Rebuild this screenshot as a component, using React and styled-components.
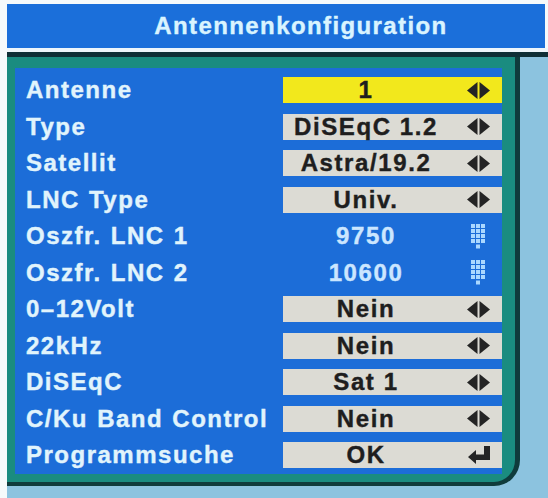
import React from 'react';
import styled, {createGlobalStyle} from 'styled-components';

const GlobalStyle = createGlobalStyle`
  html, body {
    margin: 0;
    padding: 0;
    background: #f6fafb;
  }
  body {
    font-family: "Liberation Sans", Arial, sans-serif;
  }
`

const rows = [
  {label: 'Antenne', value: '1', kind: 'active', icon: 'arrows'},
  {label: 'Type', value: 'DiSEqC 1.2', kind: 'box', icon: 'arrows'},
  {label: 'Satellit', value: 'Astra/19.2', kind: 'box', icon: 'arrows'},
  {label: 'LNC Type', value: 'Univ.', kind: 'box', icon: 'arrows'},
  {label: 'Oszfr. LNC 1', value: '9750', kind: 'plain', icon: 'keypad'},
  {label: 'Oszfr. LNC 2', value: '10600', kind: 'plain', icon: 'keypad'},
  {label: '0–12Volt', value: 'Nein', kind: 'box', icon: 'arrows'},
  {label: '22kHz', value: 'Nein', kind: 'box', icon: 'arrows'},
  {label: 'DiSEqC', value: 'Sat 1', kind: 'box', icon: 'arrows'},
  {label: 'C/Ku Band Control', value: 'Nein', kind: 'box', icon: 'arrows'},
  {label: 'Programmsuche', value: 'OK', kind: 'box', icon: 'enter'},
];

const ArrowsIcon = () => (
  <svg width="23" height="17" viewBox="0 0 23 17">
    <polygon points="0,8.5 10.5,0 10.5,17" fill="#242424" />
    <polygon points="12.5,0 23,8.5 12.5,17" fill="#242424" />
  </svg>
);

const KeypadIcon = () => {
  const dots = [];
  for (let r = 0; r < 4; r++) {
    for (let c = 0; c < 3; c++) {
      dots.push(<rect key={r + '-' + c} x={c * 5} y={r * 5} width="4" height="4" fill="#aad8ff" />);
    }
  }
  return (
    <svg width="15" height="25" viewBox="0 0 15 25">
      {dots}
      <rect x="5" y="20.5" width="4" height="4" fill="#aad8ff" />
    </svg>
  );
};

const EnterIcon = () => (
  <svg width="22" height="18" viewBox="0 0 22 18">
    <path d="M16 0 H22 V14 H8 V18 L0 11 L8 4 V8.5 H16 Z" fill="#242424" />
  </svg>
);

const icons = {arrows: ArrowsIcon, keypad: KeypadIcon, enter: EnterIcon};

const App = () => {
  return (
    <>
      <GlobalStyle />
      <Screen>
        <Header>
          <Title>Antennenkonfiguration</Title>
        </Header>
        <Rule />
        <Body>
          <Panel>
            <List>
              {rows.map(row => {
                const Icon = icons[row.icon];
                return (
                  <Row key={row.label}>
                    <Label>{row.label}</Label>
                    <ValueBox kind={row.kind}>
                      <Value kind={row.kind}>{row.value}</Value>
                      <IconSlot><Icon /></IconSlot>
                    </ValueBox>
                  </Row>
                );
              })}
            </List>
          </Panel>
        </Body>
      </Screen>
    </>
  );
};

const Screen = styled.div`
  width: 548px;
  height: 498px;
  padding: 4px 0 0 7px;
  box-sizing: border-box;
  display: flex;
  flex-direction: column;
  overflow: hidden;
`
const Header = styled.div`
  height: 44px;
  background: #1b6fda;
  display: flex;
  align-items: center;
  justify-content: center;
  padding-left: 50px;
  margin-right: 3px;
`
const Title = styled.h1`
  margin: 0;
  font-size: 24px;
  font-weight: bold;
  letter-spacing: 1.4px;
  color: #d9f4ff;
  -webkit-text-stroke: 0.4px #d9f4ff;
`
const Rule = styled.div`
  height: 4px;
  background: #eef6fb;
  border-bottom: 5px solid #0f2f36;
`
const Body = styled.div`
  flex: 1;
  background: #8cc3df;
  display: flex;
  align-items: flex-start;
`
const Panel = styled.div`
  width: 487px;
  padding: 11px 13px 8px 8px;
  background: #1a8c80;
  border-right: 5px solid #0f3b3c;
  border-bottom: 4px solid #0f3b3c;
  border-bottom-right-radius: 26px;
`
const List = styled.div`
  background: #1c6dd8;
  padding: 9px 0 6px;
  display: flex;
  flex-direction: column;
  gap: 10.5px;
`
const Row = styled.div`
  display: grid;
  grid-template-columns: 268px 219px;
  height: 26px;
  align-items: center;
`
const Label = styled.div`
  padding-left: 11px;
  font-size: 24px;
  font-weight: bold;
  letter-spacing: 1.5px;
  word-spacing: 1px;
  color: #e1f4fc;
  -webkit-text-stroke: 0.4px #e1f4fc;
  white-space: nowrap;
  line-height: 26px;
`
const ValueBox = styled.div`
  height: 26px;
  display: flex;
  align-items: center;
  background: ${p => p.kind === 'active' ? '#f2e81c' : p.kind === 'box' ? '#dcdbd4' : 'transparent'};
`
const Value = styled.div`
  width: 166px;
  text-align: center;
  font-size: 24px;
  font-weight: bold;
  letter-spacing: 1.6px;
  line-height: 26px;
  color: ${p => p.kind === 'plain' ? '#cbe6ff' : '#1e1e1e'};
  -webkit-text-stroke: 0.4px ${p => p.kind === 'plain' ? '#cbe6ff' : '#1e1e1e'};
`
const IconSlot = styled.div`
  margin-left: 18px;
  width: 23px;
  display: flex;
  justify-content: center;
  align-items: center;
`

export default App;
